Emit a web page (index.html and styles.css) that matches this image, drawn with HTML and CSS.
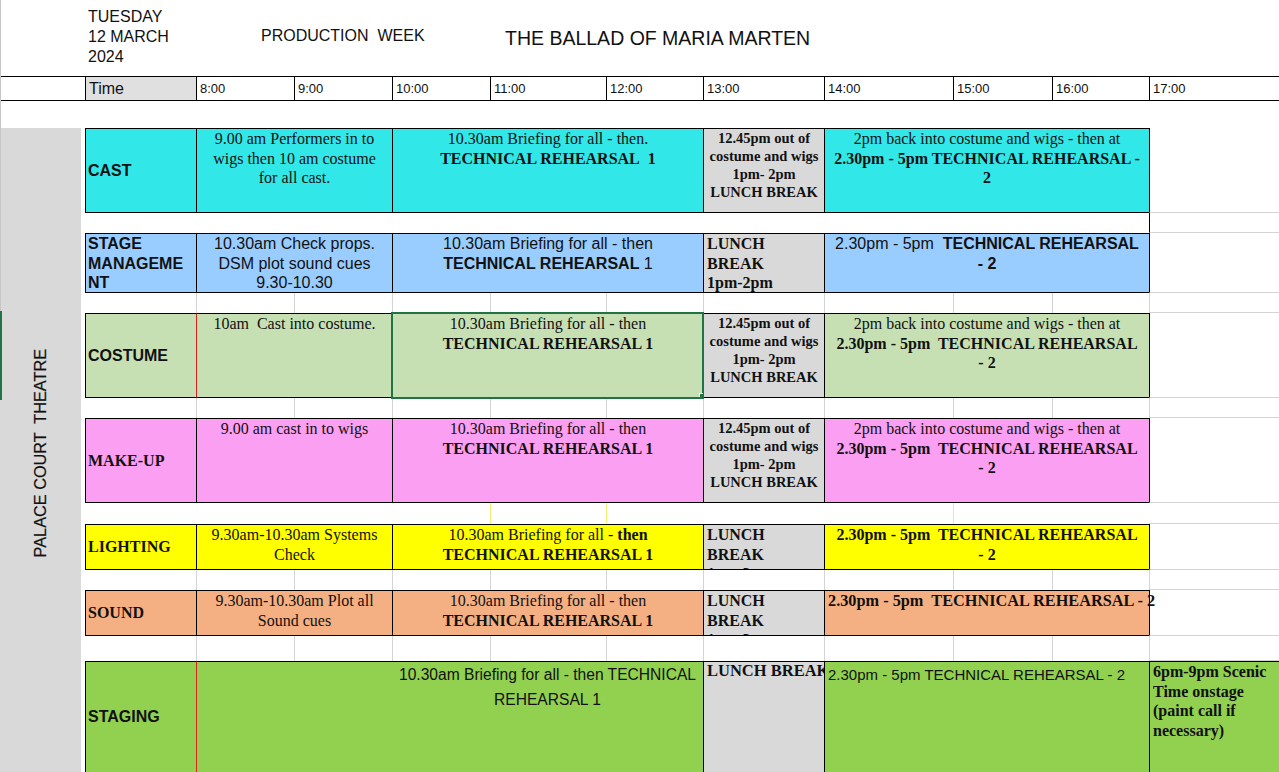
FILE: index.html
```html
<!DOCTYPE html>
<html lang="en">
<head>
<meta charset="utf-8">
<title>Production Week – The Ballad of Maria Marten</title>
<link rel="stylesheet" href="styles.css">
</head>
<body>
<div class="sheet">
  <!-- header -->
  <div class="hd-date r1">TUESDAY<br>12 MARCH<br>2024</div>
  <div class="hd-week r1">PRODUCTION&nbsp; WEEK</div>
  <div class="hd-title r1">THE BALLAD OF MARIA MARTEN</div>

  <!-- time row -->
  <div class="tm tm-blank r2 c1"></div>
  <div class="tm tm-label r2 c2">Time</div>
  <div class="tm r2 c3">8:00</div>
  <div class="tm r2 c4">9:00</div>
  <div class="tm r2 c5">10:00</div>
  <div class="tm r2 c6">11:00</div>
  <div class="tm r2 c7">12:00</div>
  <div class="tm r2 c8">13:00</div>
  <div class="tm r2 c9">14:00</div>
  <div class="tm r2 c10">15:00</div>
  <div class="tm r2 c11">16:00</div>
  <div class="tm r2 c12">17:00</div>

  <!-- venue column -->
  <div class="venue"><span>PALACE COURT  THEATRE</span></div>

  <!-- CAST -->
  <div class="cell lbl cyan r4">CAST</div>
  <div class="cell a cyan ser ctr r4">9.00 am Performers in to<br>wigs then 10 am costume<br>for all cast.</div>
  <div class="cell b cyan ser ctr r4">10.30am Briefing for all - then.<br><b>TECHNICAL REHEARSAL&nbsp; 1</b></div>
  <div class="cell l grey ser ctr lunch r4">12.45pm out of<br>costume and wigs<br>1pm- 2pm<br>LUNCH BREAK</div>
  <div class="cell c cyan ser ctr r4">2pm back into costume and wigs - then at<br><b>2.30pm - 5pm TECHNICAL REHEARSAL -<br>2</b></div>
  <div class="xc xb r4"></div>

  <div class="xc xb r5"></div>

  <!-- STAGE MANAGEMENT -->
  <div class="cell lbl lbl-top blue r6">STAGE<br>MANAGEME<br>NT</div>
  <div class="cell a blue ctr r6">10.30am Check props.<br>DSM plot sound cues<br>9.30-10.30</div>
  <div class="cell b blue ctr r6">10.30am Briefing for all - then<br><b>TECHNICAL REHEARSAL</b> 1</div>
  <div class="cell l grey ser bold left r6">LUNCH<br>BREAK<br>1pm-2pm</div>
  <div class="cell c blue ctr r6">2.30pm - 5pm&nbsp; <b>TECHNICAL REHEARSAL<br>- 2</b></div>
  <div class="xc xb r6"></div>

  <div class="g r7 c3"></div><div class="g r7 c4"></div><div class="g r7 c5"></div><div class="g r7 c6"></div><div class="g r7 c7"></div><div class="g r7 c8"></div><div class="g r7 c9"></div><div class="g r7 c10"></div><div class="g r7 c11"></div><div class="xc g r7"></div>

  <!-- COSTUME -->
  <div class="cell lbl green r8">COSTUME</div>
  <div class="cell a green ser ctr red-l r8">10am&nbsp; Cast into costume.</div>
  <div class="cell b green ser ctr sel r8">10.30am Briefing for all - then<br><b>TECHNICAL REHEARSAL 1</b></div>
  <div class="cell l grey ser ctr lunch r8">12.45pm out of<br>costume and wigs<br>1pm- 2pm<br>LUNCH BREAK</div>
  <div class="cell c green ser ctr r8">2pm back into costume and wigs - then at<br><b>2.30pm - 5pm&nbsp; TECHNICAL REHEARSAL<br>- 2</b></div>
  <div class="xc xb r8"></div>

  <div class="g r9 c3"></div><div class="g r9 c4"></div><div class="g r9 c5"></div><div class="g r9 c6"></div><div class="g r9 c7"></div><div class="g r9 c8"></div><div class="g r9 c9"></div><div class="g r9 c10"></div><div class="g r9 c11"></div><div class="xc g r9"></div>

  <!-- MAKE-UP -->
  <div class="cell lbl ser pink r10">MAKE-UP</div>
  <div class="cell a pink ser ctr r10">9.00 am cast in to wigs</div>
  <div class="cell b pink ser ctr r10">10.30am Briefing for all - then<br><b>TECHNICAL REHEARSAL 1</b></div>
  <div class="cell l grey ser ctr lunch r10">12.45pm out of<br>costume and wigs<br>1pm- 2pm<br>LUNCH BREAK</div>
  <div class="cell c pink ser ctr r10">2pm back into costume and wigs - then at<br><b>2.30pm - 5pm&nbsp; TECHNICAL REHEARSAL<br>- 2</b></div>
  <div class="xc xb r10"></div>

  <div class="gy r11 c6"></div><div class="gy r11 c7"></div><div class="gy r11 c10"></div><div class="xc r11"></div>

  <!-- LIGHTING -->
  <div class="cell lbl ser yellow r12">LIGHTING</div>
  <div class="cell a yellow ser ctr r12">9.30am-10.30am Systems<br>Check</div>
  <div class="cell b yellow ser ctr r12">10.30am Briefing for all - <b>then</b><br><b>TECHNICAL REHEARSAL 1</b></div>
  <div class="cell l grey ser bold left r12">LUNCH<br>BREAK<br>1pm-2pm</div>
  <div class="cell c yellow ser ctr bold r12">2.30pm - 5pm&nbsp; TECHNICAL REHEARSAL<br>- 2</div>
  <div class="xc xb r12"></div>

  <div class="g r13 c3"></div><div class="g r13 c4"></div><div class="g r13 c5"></div><div class="g r13 c6"></div><div class="g r13 c7"></div><div class="g r13 c8"></div><div class="g r13 c9"></div><div class="g r13 c10"></div><div class="g r13 c11"></div><div class="xc g r13"></div>

  <!-- SOUND -->
  <div class="cell lbl ser orange r14">SOUND</div>
  <div class="cell a orange ser ctr r14">9.30am-10.30am Plot all<br>Sound cues</div>
  <div class="cell b orange ser ctr r14">10.30am Briefing for all - then<br><b>TECHNICAL REHEARSAL 1</b></div>
  <div class="cell l grey ser bold left r14">LUNCH<br>BREAK<br>1pm-2pm</div>
  <div class="cell c orange ser bold left spill r14">2.30pm - 5pm&nbsp; TECHNICAL REHEARSAL - 2</div>
  <div class="xc xb r14"></div>

  <div class="g r15 c3"></div><div class="g r15 c4"></div><div class="g r15 c5"></div><div class="g r15 c6"></div><div class="g r15 c7"></div><div class="g r15 c8"></div><div class="g r15 c9"></div><div class="g r15 c10"></div><div class="g r15 c11"></div><div class="xc g r15"></div>

  <!-- STAGING -->
  <div class="cell lbl lime open r16">STAGING</div>
  <div class="cell lime red-l open r16 sa"></div>
  <div class="cell lime ctr wide no-l open r16 sb">10.30am Briefing for all - then TECHNICAL<br>REHEARSAL 1</div>
  <div class="cell l grey ser bold left open staging-lunch r16">LUNCH BREAK</div>
  <div class="cell c lime left wide open r16">2.30pm - 5pm TECHNICAL REHEARSAL - 2</div>
  <div class="cell lime ser bold left open scenic r16 c12">6pm-9pm Scenic<br>Time onstage<br>(paint call if<br>necessary)</div>
</div>
<div class="edge"></div>
<div class="edge-sel"></div>
</body>
</html>
```

FILE: styles.css
```css
* { box-sizing: border-box; margin: 0; padding: 0; }
html, body { background: #fff; }
body {
  width: 1279px;
  height: 772px;
  overflow: hidden;
  position: relative;
  font-family: "Liberation Sans", Arial, sans-serif;
  font-size: 16px;
  color: #111;
}

.sheet {
  display: grid;
  grid-template-columns: 85px 111px 98px 98px 98px 116px 97px 121px 129px 99px 97px 130px;
  grid-template-rows: 76px 25px 27px 85px 20px 60px 20px 85px 20px 85px 21px 46px 20px 46px 25px 111px;
}

/* rows */
.r1 { grid-row: 1; } .r2 { grid-row: 2; } .r4 { grid-row: 4; } .r5 { grid-row: 5; }
.r6 { grid-row: 6; } .r7 { grid-row: 7; } .r8 { grid-row: 8; } .r9 { grid-row: 9; }
.r10 { grid-row: 10; } .r11 { grid-row: 11; } .r12 { grid-row: 12; } .r13 { grid-row: 13; }
.r14 { grid-row: 14; } .r15 { grid-row: 15; } .r16 { grid-row: 16; }

/* columns */
.c1 { grid-column: 1 / 2; } .c2 { grid-column: 2 / 3; } .c3 { grid-column: 3 / 4; }
.c4 { grid-column: 4 / 5; } .c5 { grid-column: 5 / 6; } .c6 { grid-column: 6 / 7; }
.c7 { grid-column: 7 / 8; } .c8 { grid-column: 8 / 9; } .c9 { grid-column: 9 / 10; }
.c10 { grid-column: 10 / 11; } .c11 { grid-column: 11 / 12; } .c12 { grid-column: 12 / 13; }
.lbl { grid-column: 2 / 3; }
.a { grid-column: 3 / 5; }
.b { grid-column: 5 / 8; }
.l { grid-column: 8 / 9; }
.c { grid-column: 9 / 12; }
.sa { grid-column: 3 / 5; }
.sb { grid-column: 5 / 8; }

/* header */
.hd-date { grid-column: 2 / 3; padding: 7px 0 0 3px; line-height: 20px; white-space: nowrap; }
.hd-week { grid-column: 3 / 6; padding: 26px 0 0 65px; line-height: 20px; white-space: nowrap; }
.hd-title { grid-column: 6 / 11; padding: 27px 0 0 15px; font-size: 19.5px; line-height: 22px; white-space: nowrap; }

/* time row */
.tm {
  border-top: 1px solid #000;
  border-bottom: 1px solid #000;
  border-left: 1px solid #000;
  font-size: 13px;
  padding-left: 3px;
  display: flex;
  align-items: center;
}
.tm-blank { border-left: 0; }
.tm-label { background: #e0e0e0; font-size: 16px; padding-left: 3px; }

/* venue */
.venue {
  grid-column: 1 / 2;
  grid-row: 4 / 17;
  background: #d9d9d9;
  border-right: 4px solid #fff;
  display: flex;
  align-items: center;
  justify-content: center;
}
.venue span {
  writing-mode: vertical-rl;
  transform: rotate(180deg);
  font-size: 16.3px;
  white-space: pre;
  margin-top: 6px;
  -webkit-text-stroke: 0.2px #111;
}

/* cells */
.cell {
  border-top: 1px solid #000;
  border-left: 1px solid #000;
  border-bottom: 1px solid #000;
  overflow: hidden;
  white-space: nowrap;
  line-height: 19.5px;
}
.lbl {
  font-weight: bold;
  display: flex;
  align-items: center;
  padding-left: 2px;
}
.lbl-top { align-items: flex-start; }
.ser { font-family: "Liberation Serif", "Times New Roman", serif; }
.bold { font-weight: bold; }
.ctr { text-align: center; }
.left { text-align: left; padding-left: 3px; }
.lunch { font-weight: bold; font-size: 14.5px; line-height: 18px; }
.red-l { border-left-color: #e02020; }
.no-l { border-left: 0; }
.open { border-bottom: 0; }
.spill { overflow: visible; font-size: 16.3px; }
.sel {
  position: relative;
  outline: 2px solid #217346;
  outline-offset: -1px;
  z-index: 1;
}
.sel::after {
  content: "";
  position: absolute;
  right: -4px;
  bottom: -4px;
  width: 6px;
  height: 6px;
  background: #217346;
  border: 1px solid #fff;
}
.wide { font-size: 15px; line-height: 25px; }
.sb { font-size: 15.6px; }
.staging-lunch { line-height: 16px; padding-top: 1px; font-size: 16.5px; }
.scenic { line-height: 19.5px; }

/* colours */
.cyan { background: #31e7e8; }
.blue { background: #99ccff; }
.green { background: #c6e0b4; }
.pink { background: #fb9ff2; }
.yellow { background: #ffff00; }
.orange { background: #f4b083; }
.lime { background: #92d050; }
.grey { background: #d9d9d9; }

/* gap rows and the column past the schedule */
.g { border-left: 1px solid #d4d4d4; }
.xc { grid-column: 12 / 13; border-bottom: 1px solid #d4d4d4; }
.xb { border-left: 1px solid #000; }
.gy { border-left: 1px solid #f0ef70; }

/* window chrome on the left edge */
.edge { position: absolute; left: 0; top: 0; width: 1px; height: 311px; background: #c6c6c6; }
.edge-sel { position: absolute; left: 0; top: 311px; width: 2px; height: 89px; background: #217346; }
```
